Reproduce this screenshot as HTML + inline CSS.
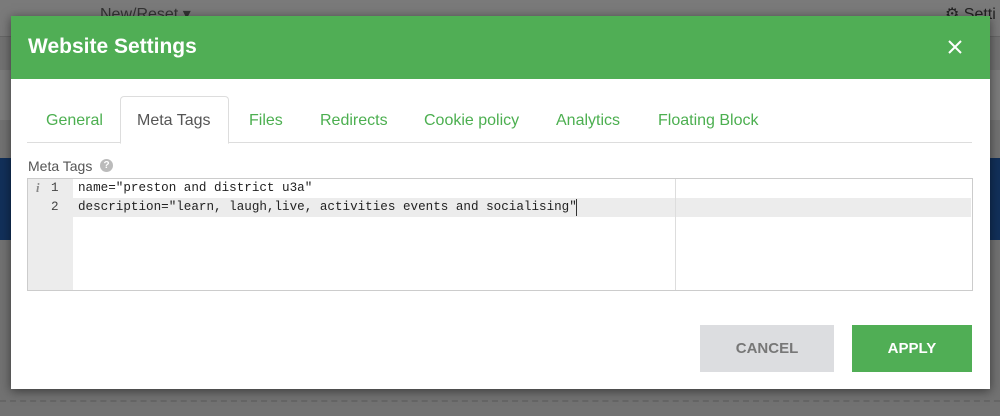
<!DOCTYPE html>
<html><head><style>
body{margin:0;width:1000px;height:416px;overflow:hidden;background:#727272;font-family:"Liberation Sans",sans-serif;position:relative}
.abs{position:absolute}
.tab{position:absolute;top:112px;font-size:16px;color:#4caf50}
.mono{font-family:"Liberation Mono",monospace;font-size:12.6px;color:#222}
</style></head><body>
<div class="abs" style="left:0;top:0;width:1000px;height:36px;background:#7a7a7a;border-bottom:1px solid #666"></div>
<div class="abs" style="left:0;top:70px;width:1000px;height:50px;background:#7c7c7c"></div>
<div class="abs" style="left:0;top:158px;width:12px;height:82px;background:#12305a"></div>
<div class="abs" style="left:988px;top:158px;width:12px;height:82px;background:#12305a"></div>
<div class="abs" style="left:0;top:400px;width:1000px;border-top:2px dashed #666"></div>
<div class="abs" style="left:100px;top:4px;color:#333;font-size:16px">New/Reset ▾</div>
<div class="abs" style="left:945px;top:4px;color:#222;font-size:16px">⚙ Setti</div>
<div class="abs" style="left:11px;top:16px;width:979px;height:373px;background:#fff;box-shadow:0 2px 10px rgba(0,0,0,.5)">
  <div class="abs" style="left:0;top:0;width:979px;height:63px;background:#50ae55"></div>
  <div class="abs" style="left:17px;top:19px;color:#fff;font-size:21px;font-weight:bold">Website Settings</div>
  <svg class="abs" style="left:937px;top:24px" width="14" height="14"><path d="M1 1L13 13M13 1L1 13" stroke="#fff" stroke-width="2"/></svg>
  <div class="abs" style="left:16px;top:126px;width:945px;border-top:1px solid #ddd"></div>
  <div class="abs" style="left:109px;top:80px;width:107px;height:46px;border:1px solid #ddd;border-bottom:1px solid #fff;border-radius:4px 4px 0 0;background:#fff"></div>
</div>
<div class="tab" style="left:46px">General</div>
<div class="tab" style="left:137px;color:#555">Meta Tags</div>
<div class="tab" style="left:249px">Files</div>
<div class="tab" style="left:320px">Redirects</div>
<div class="tab" style="left:424px">Cookie policy</div>
<div class="tab" style="left:556px">Analytics</div>
<div class="tab" style="left:658px">Floating Block</div>
<div class="abs" style="left:28px;top:158px;font-size:14px;color:#555">Meta Tags</div>
<div class="abs" style="left:100px;top:159px;width:13px;height:13px;border-radius:50%;background:#bbb;color:#fff;font-size:10px;font-weight:bold;text-align:center;line-height:13px">?</div>
<div class="abs" style="left:27px;top:178px;width:944px;height:111px;border:1px solid #ccc;background:#fff"></div>
<div class="abs" style="left:28px;top:179px;width:45px;height:111px;background:#ececec"></div>
<div class="abs" style="left:28px;top:198px;width:943px;height:19px;background:#ececec"></div>
<div class="abs" style="left:675px;top:179px;height:111px;border-left:1px solid #ddd"></div>
<div class="abs mono" style="left:36px;top:181px;color:#888;font-style:italic;font-family:'Liberation Serif',serif;font-weight:bold">i</div>
<div class="abs mono" style="left:51px;top:181px;color:#444">1</div>
<div class="abs mono" style="left:51px;top:200px;color:#444">2</div>
<div class="abs mono" style="left:78px;top:181px">name="preston and district u3a"</div>
<div class="abs mono" style="left:78px;top:200px">description="learn, laugh,live, activities events and socialising"</div>
<div class="abs" style="left:576px;top:199px;height:17px;border-left:1px solid #333"></div>
<div class="abs" style="left:700px;top:325px;width:134px;height:47px;background:#dcdde0;color:#777;font-weight:bold;font-size:15px;text-align:center;line-height:47px">CANCEL</div>
<div class="abs" style="left:852px;top:325px;width:120px;height:47px;background:#50ae55;color:#fff;font-weight:bold;font-size:15px;text-align:center;line-height:47px">APPLY</div>
</body></html>
